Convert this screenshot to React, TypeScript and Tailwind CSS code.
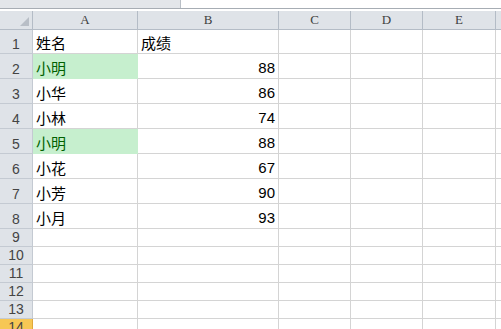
const cols = [
  { label: 'A', w: 'w-[105px]' },
  { label: 'B', w: 'w-[141px]' },
  { label: 'C', w: 'w-[72px]' },
  { label: 'D', w: 'w-[72px]' },
  { label: 'E', w: 'w-[73px]' },
  { label: '', w: 'w-[60px]' },
];

type Row = { n: number; h: string; name?: string; score?: string; hit?: boolean };

const rows: Row[] = [
  { n: 1, h: 'h-[24px]', name: '姓名', score: '成绩' },
  { n: 2, h: 'h-[25px]', name: '小明', score: '88', hit: true },
  { n: 3, h: 'h-[25px]', name: '小华', score: '86' },
  { n: 4, h: 'h-[25px]', name: '小林', score: '74' },
  { n: 5, h: 'h-[25px]', name: '小明', score: '88', hit: true },
  { n: 6, h: 'h-[25px]', name: '小花', score: '67' },
  { n: 7, h: 'h-[25px]', name: '小芳', score: '90' },
  { n: 8, h: 'h-[25px]', name: '小月', score: '93' },
  { n: 9, h: 'h-[18px]' },
  { n: 10, h: 'h-[18px]' },
  { n: 11, h: 'h-[18px]' },
  { n: 12, h: 'h-[18px]' },
  { n: 13, h: 'h-[18px]' },
  { n: 14, h: 'h-[18px]' },
];

const cjk = "font-['Noto_Sans_CJK_SC',sans-serif]";

export default function App() {
  return (
    <div className="w-[501px] h-[329px] overflow-hidden bg-white">
      {/* formula bar remnant */}
      <div className="flex h-[8px]">
        <div className="w-[181px] bg-[#e3e6ea] border-r border-[#b9bfc6]" />
        <div className="flex-1 bg-white" />
      </div>
      <div className="h-px bg-[#a7adb4]" />
      <div className="h-[2px] bg-white" />

      {/* column headers */}
      <div className="flex h-[19px] whitespace-nowrap">
        <div className="relative w-[33px] shrink-0 bg-[#dfe3e8] border-r border-b border-[#b4bcc6]">
          <div className="absolute right-[3px] bottom-[3px] w-0 h-0 border-l-[9px] border-l-transparent border-b-[9px] border-b-[#b8bec6]" />
        </div>
        {cols.map((c, i) => (
          <div
            key={i}
            className={`${c.w} shrink-0 bg-[#dfe3e8] border-r border-b border-[#b4bcc6] flex items-center justify-center font-['Liberation_Serif',serif] text-[13px] text-[#404040]`}
          >
            {c.label}
          </div>
        ))}
      </div>

      {rows.map((r) => (
        <div key={r.n} className={`flex ${r.h} whitespace-nowrap`}>
          <div
            className={`w-[33px] shrink-0 border-r border-b flex items-end justify-center font-['Liberation_Sans',sans-serif] text-[14px] leading-none pb-[2px] text-[#444444] ${
              r.n === 14 ? 'bg-[#f7c754] border-[#e0a83a]' : 'bg-[#dfe3e8] border-[#c4cad2]'
            }`}
          >
            {r.n}
          </div>
          <div
            className={`w-[105px] shrink-0 border-r border-b flex items-end pl-[3px] pb-[3px] text-[15px] leading-none ${cjk} ${
              r.hit ? 'bg-[#c6efce] border-[#c6efce] text-[#006100]' : 'border-[#d4d4d4] text-black'
            }`}
          >
            {r.name}
          </div>
          <div
            className={`w-[141px] shrink-0 border-r border-b border-[#d4d4d4] flex items-end pb-[3px] leading-none ${
              r.n === 1
                ? `pl-[3px] text-[15px] ${cjk}`
                : "justify-end pr-[3px] text-[15px] font-['Liberation_Sans',sans-serif]"
            }`}
          >
            {r.score}
          </div>
          <div className="w-[72px] shrink-0 border-r border-b border-[#d4d4d4]" />
          <div className="w-[72px] shrink-0 border-r border-b border-[#d4d4d4]" />
          <div className="w-[73px] shrink-0 border-r border-b border-[#d4d4d4]" />
          <div className="w-[60px] shrink-0 border-b border-[#d4d4d4]" />
        </div>
      ))}
    </div>
  );
}
